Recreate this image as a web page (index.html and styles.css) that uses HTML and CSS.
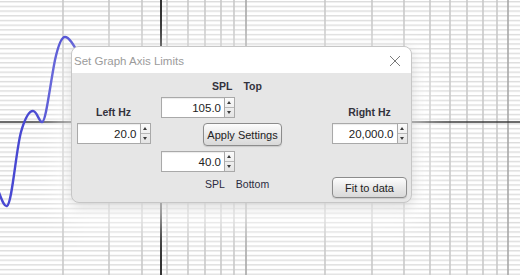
FILE: index.html
```
<!DOCTYPE html>
<html lang="en">
<head>
    <meta charset="UTF-8">
    <meta name="viewport" content="width=device-width, initial-scale=1.0">
    <title>Set Graph Axis Limits</title>
    <link rel="stylesheet" href="styles.css">
</head>
<body>
    <div class="graph">
        <svg class="plot" width="520" height="275" viewBox="0 0 520 275">
            <defs>
                <pattern id="hgrid" width="520" height="4.7" patternUnits="userSpaceOnUse" y="1">
                    <rect x="0" y="0" width="520" height="1.4" fill="#dcdcdc"/>
                </pattern>
            </defs>
            <rect width="520" height="275" fill="#ffffff"/>
            <rect width="520" height="275" fill="url(#hgrid)"/>
            <g stroke="#c9c9c9" stroke-width="1.6">
                <line x1="63" y1="0" x2="63" y2="275"/>
                <line x1="109" y1="0" x2="109" y2="275"/>
                <line x1="142" y1="0" x2="142" y2="275"/>
                <line x1="167" y1="0" x2="167" y2="275"/>
                <line x1="188" y1="0" x2="188" y2="275"/>
                <line x1="205" y1="0" x2="205" y2="275"/>
                <line x1="221" y1="0" x2="221" y2="275"/>
                <line x1="234" y1="0" x2="234" y2="275"/>
                <line x1="325" y1="0" x2="325" y2="275"/>
                <line x1="372" y1="0" x2="372" y2="275"/>
                <line x1="404" y1="0" x2="404" y2="275"/>
                <line x1="430" y1="0" x2="430" y2="275"/>
                <line x1="450" y1="0" x2="450" y2="275"/>
                <line x1="467" y1="0" x2="467" y2="275"/>
                <line x1="483" y1="0" x2="483" y2="275"/>
                <line x1="497" y1="0" x2="497" y2="275"/>
            </g>
            <g stroke="#a8a8a8" stroke-width="1.6">
                <line x1="246" y1="0" x2="246" y2="275"/>
                <line x1="508" y1="0" x2="508" y2="275"/>
            </g>
            <line x1="0" y1="122" x2="520" y2="122" stroke="#3a3a3a" stroke-width="1.4"/>
            <line x1="161" y1="0" x2="161" y2="275" stroke="#333333" stroke-width="2"/>
            <path d="M -2 190 C 2 200 4 207 7 206 C 12 204 16 150 21 132 C 25 118 29 111 33 111 C 37 111 39 122 42 122 C 46 122 50 85 55 60 C 59 42 62 37 65 37 C 69 37 73 44 80 56"
                  fill="none" stroke="#4848d2" stroke-width="2.4"/>
        </svg>

        <div class="dialog">
            <div class="titlebar">
                <span class="title">Set Graph Axis Limits</span>
                <svg class="close" width="12" height="12" viewBox="0 0 12 12">
                    <path d="M1 1 L11 11 M11 1 L1 11" stroke="#7a7a7a" stroke-width="1"/>
                </svg>
            </div>
            <div class="content">
                <div class="col col-left">
                    <div class="label strong">Left Hz</div>
                    <div class="spin">
                        <input type="text" value="20.0">
                        <span class="arrows"><i class="up"></i><i class="down"></i></span>
                    </div>
                </div>

                <div class="col col-mid">
                    <div class="pair pair-top strong"><span>SPL</span><span>Top</span></div>
                    <div class="spin">
                        <input type="text" value="105.0">
                        <span class="arrows"><i class="up"></i><i class="down"></i></span>
                    </div>
                    <button class="btn btn-apply">Apply Settings</button>
                    <div class="spin">
                        <input type="text" value="40.0">
                        <span class="arrows"><i class="up"></i><i class="down"></i></span>
                    </div>
                    <div class="pair pair-bottom"><span>SPL</span><span>Bottom</span></div>
                </div>

                <div class="col col-right">
                    <div class="label strong">Right Hz</div>
                    <div class="spin spin-wide">
                        <input type="text" value="20,000.0">
                        <span class="arrows"><i class="up"></i><i class="down"></i></span>
                    </div>
                    <button class="btn btn-fit">Fit to data</button>
                </div>
            </div>
        </div>
    </div>
</body>
</html>
```

FILE: styles.css
```
body {
    margin: 0;
    font-family: "Liberation Sans", Arial, sans-serif;
    font-size: 11px;
    color: #2b2b33;
}

.graph {
    position: relative;
    width: 520px;
    height: 275px;
    overflow: hidden;
}

.plot {
    display: block;
}

.dialog {
    position: absolute;
    left: 71px;
    top: 46px;
    width: 341px;
    height: 157px;
    box-sizing: border-box;
    border: 1px solid #c6c6c6;
    border-radius: 8px;
    background-color: #e6e6e6;
    overflow: hidden;
    box-shadow: 0 4px 14px rgba(0,0,0,0.14), 0 12px 34px 8px rgba(255,255,255,0.75);
}

.titlebar {
    height: 26px;
    background-color: #ffffff;
    display: flex;
    align-items: center;
    justify-content: space-between;
    padding: 0 10px 0 2px;
}

.title {
    color: #9b9b9b;
    font-size: 11.5px;
    padding-top: 2px;
}

.close {
    display: block;
    margin-top: 2px;
}

.content {
    display: flex;
    padding-left: 4px;
}

.col {
    display: flex;
    flex-direction: column;
    width: 75px;
}

.col-left {
    padding-top: 32px;
    align-items: center;
}

.col-mid {
    width: 121px;
    margin-left: 10px;
    padding-top: 6px;
}

.col-right {
    margin-left: 50px;
    padding-top: 32px;
    align-items: center;
}

.label {
    line-height: 14px;
    height: 14px;
    margin-bottom: 4px;
}

.strong {
    font-weight: bold;
    font-size: 10.5px;
    color: #33333d;
}

.pair {
    display: flex;
    gap: 11px;
    line-height: 14px;
    height: 14px;
}

.pair-top {
    padding-left: 51px;
    margin-bottom: 4px;
}

.pair-bottom {
    padding-left: 44px;
    margin-top: 5px;
    font-size: 10.5px;
    color: #2b2b40;
}

.spin {
    display: flex;
    height: 21px;
}

.spin input {
    width: 63px;
    height: 21px;
    box-sizing: border-box;
    border: 1px solid #a9a9a9;
    border-right: none;
    background-color: #ffffff;
    box-shadow: inset 0 1px 1px rgba(0,0,0,0.08);
    font-family: "Liberation Sans", Arial, sans-serif;
    font-size: 11.5px;
    color: #222222;
    text-align: right;
    padding: 0 3px 0 0;
    margin: 0;
    outline: none;
}

.spin-wide input {
    width: 65px;
}

.arrows {
    display: flex;
    flex-direction: column;
    width: 11px;
    height: 21px;
    box-sizing: border-box;
    border: 1px solid #a9a9a9;
    background: linear-gradient(#fbfbfb, #e4e4e4);
}

.arrows i {
    flex: 1;
    position: relative;
}

.arrows .up {
    border-bottom: 1px solid #b8b8b8;
}

.arrows i::after {
    content: "";
    position: absolute;
    left: 2px;
    top: 3px;
    border-left: 2.5px solid transparent;
    border-right: 2.5px solid transparent;
}

.arrows .up::after {
    border-bottom: 3px solid #3c3c3c;
}

.arrows .down::after {
    border-top: 3px solid #3c3c3c;
}

.btn {
    font-family: "Liberation Sans", Arial, sans-serif;
    font-size: 11px;
    color: #222222;
    border: 1px solid #8c8c8c;
    border-radius: 4px;
    background: linear-gradient(#fdfdfd, #e9e9e9 50%, #d9d9d9);
    box-shadow: 0 1px 1px rgba(0,0,0,0.12);
    padding: 0;
    margin: 0;
    cursor: pointer;
}

.btn-apply {
    width: 79px;
    height: 23px;
    margin: 5px 0 5px 42px;
}

.btn-fit {
    width: 75px;
    height: 21px;
    margin-top: 33px;
}
```
